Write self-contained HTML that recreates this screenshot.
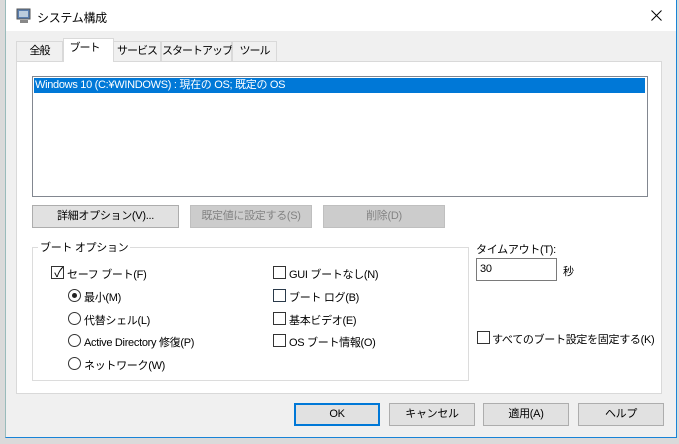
<!DOCTYPE html><html><head><meta charset="utf-8"><style>
*{box-sizing:border-box;margin:0;padding:0}
body{width:679px;height:444px;background:#dadada;position:relative;overflow:hidden;font-family:"Liberation Sans","Noto Sans CJK JP",sans-serif;font-size:11px;letter-spacing:-0.3px;color:#000}
.a{position:absolute}
.win{left:5px;top:0;width:672px;height:438px;background:#f0f0f0;border:1px solid #1883d7;border-top:none;border-left:1px solid #9bb;}
.btn{position:absolute;height:23px;background:#e1e1e1;border:1px solid #adadad;text-align:center;line-height:21px}
.dis{background:#cccccc;border-color:#bfbfbf;color:#838383}
.cb{position:absolute;width:13px;height:13px;border:1px solid #333;background:#fff}
.rb{position:absolute;width:13px;height:13px;border:1px solid #333;border-radius:50%;background:#fff}
.t{position:absolute;white-space:nowrap}
.tab{position:absolute;top:41px;height:20px;border:1px solid #d9d9d9;border-bottom:none;background:#f0f0f0;text-align:center;line-height:19px;white-space:nowrap;letter-spacing:-1px}
</style></head><body>
<div class="a win"></div>
<div class="a" style="left:6px;top:0;width:670px;height:31px;background:#fff"></div>
<svg class="a" style="left:16px;top:8px" width="16" height="16"><rect x="1" y="1" width="13" height="10" fill="#5a7fb0" stroke="#555"/><rect x="3" y="3" width="9" height="6" fill="#bcd"/><rect x="4" y="12" width="8" height="3" fill="#888"/></svg>
<div class="t" style="left:37px;top:9px;font-size:12px">システム構成</div>
<svg class="a" style="left:651px;top:10px" width="11" height="11"><path d="M0.5 0.5L10.5 10.5M10.5 0.5L0.5 10.5" stroke="#000" stroke-width="1"/></svg>
<div class="tab" style="left:16px;width:47px">全般</div>
<div class="tab" style="left:113px;width:48px">サービス</div>
<div class="tab" style="left:161px;width:71px">スタートアップ</div>
<div class="tab" style="left:232px;width:45px">ツール</div>
<div class="a" style="left:16px;top:61px;width:646px;height:333px;background:#fff;border:1px solid #d9d9d9"></div>
<div class="tab" style="left:63px;top:38px;height:24px;width:51px;background:#fff;border-color:#d9d9d9;padding-right:8px">ブート</div>
<div class="a" style="left:32px;top:76px;width:616px;height:121px;border:1px solid #828790;background:#fff"></div>
<div class="a" style="left:34px;top:78px;width:611px;height:15px;background:#0078d7"></div>
<div class="t" style="left:35px;top:78px;color:#fff;line-height:15px">Windows 10 (C:¥WINDOWS) : 現在の OS; 既定の OS</div>
<div class="btn" style="left:32px;top:205px;width:147px">詳細オプション(V)...</div>
<div class="btn dis" style="left:190px;top:205px;width:122px">既定値に設定する(S)</div>
<div class="btn dis" style="left:323px;top:205px;width:122px">削除(D)</div>
<div class="a" style="left:32px;top:247px;width:437px;height:134px;border:1px solid #dcdcdc"></div>
<div class="t" style="left:38px;top:239px;background:#fff;padding:0 2px">ブート オプション</div>
<div class="cb" style="left:51px;top:266px"></div><div class="t" style="left:51px;top:262px;font-size:13px">&nbsp;✓</div>
<div class="t" style="left:67px;top:266px">セーフ ブート(F)</div>
<div class="rb" style="left:68px;top:289px"></div><div class="a" style="left:72px;top:293px;width:5px;height:5px;border-radius:50%;background:#222"></div>
<div class="t" style="left:84px;top:289px">最小(M)</div>
<div class="rb" style="left:68px;top:312px"></div><div class="t" style="left:84px;top:312px">代替シェル(L)</div>
<div class="rb" style="left:68px;top:334px"></div><div class="t" style="left:84px;top:334px">Active Directory 修復(P)</div>
<div class="rb" style="left:68px;top:357px"></div><div class="t" style="left:84px;top:357px">ネットワーク(W)</div>
<div class="cb" style="left:273px;top:266px"></div><div class="t" style="left:289px;top:266px">GUI ブートなし(N)</div>
<div class="cb" style="left:273px;top:289px;border-color:#2a3a4a"></div><div class="t" style="left:289px;top:289px">ブート ログ(B)</div>
<div class="cb" style="left:273px;top:312px"></div><div class="t" style="left:289px;top:312px">基本ビデオ(E)</div>
<div class="cb" style="left:273px;top:334px"></div><div class="t" style="left:289px;top:334px">OS ブート情報(O)</div>
<div class="t" style="left:476px;top:241px">タイムアウト(T):</div>
<div class="a" style="left:476px;top:258px;width:81px;height:23px;border:1px solid #7a7a7a;background:#fff"></div>
<div class="t" style="left:480px;top:263px">30</div>
<div class="t" style="left:563px;top:263px">秒</div>
<div class="cb" style="left:477px;top:331px"></div><div class="t" style="left:492px;top:331px">すべてのブート設定を固定する(K)</div>
<div class="btn" style="left:294px;top:403px;width:86px;border:2px solid #0078d7;line-height:19px">OK</div>
<div class="btn" style="left:389px;top:403px;width:86px">キャンセル</div>
<div class="btn" style="left:483px;top:403px;width:86px">適用(A)</div>
<div class="btn" style="left:578px;top:403px;width:86px">ヘルプ</div>
</body></html>
